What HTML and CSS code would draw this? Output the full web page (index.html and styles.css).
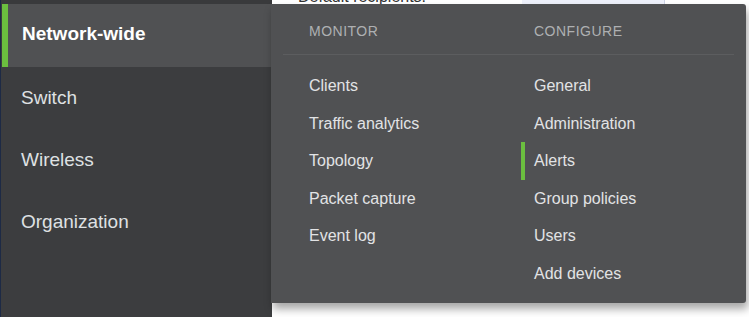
FILE: index.html
```html
<!DOCTYPE html>
<html>
<head>
  <title>Network-wide menu</title>
  <link rel="stylesheet" href="styles.css">
</head>
<body>
  <div class="layout">
    <nav class="sidebar">
      <div class="side-top"></div>
      <a class="side-item active">Network-wide</a>
      <a class="side-item">Switch</a>
      <a class="side-item">Wireless</a>
      <a class="side-item">Organization</a>
    </nav>

    <div class="page">
      <div class="page-head">
        <span class="recipients">Default recipients:</span>
        <div class="recipients-box"></div>
      </div>
    </div>
  </div>

  <div class="dropdown">
    <div class="dropdown-head">
      <div class="col-title">Monitor</div>
      <div class="col-title">Configure</div>
    </div>
    <div class="dropdown-body">
      <ul class="menu-col">
        <li>Clients</li>
        <li>Traffic analytics</li>
        <li>Topology</li>
        <li>Packet capture</li>
        <li>Event log</li>
      </ul>
      <ul class="menu-col">
        <li>General</li>
        <li>Administration</li>
        <li class="current">Alerts</li>
        <li>Group policies</li>
        <li>Users</li>
        <li>Add devices</li>
      </ul>
    </div>
  </div>
</body>
</html>
```

FILE: styles.css
```css
body {
  margin: 0;
  font-family: "Liberation Sans", Arial, sans-serif;
  background-color: white;
  overflow: hidden;
}
.layout {
  display: flex;
  height: 317px;
}
.sidebar {
  width: 271px;
  background-color: #3c3d3f;
  border-left: 1px solid #1d2a45;
  display: flex;
  flex-direction: column;
  flex-shrink: 0;
}
.side-top {
  height: 4px;
  background-color: #393a3c;
}
.side-item {
  display: block;
  height: 62px;
  line-height: 62px;
  padding-left: 20px;
  font-size: 19px;
  color: #dfe1e3;
}
.side-item.active {
  height: 63px;
  line-height: 60px;
  margin-left: 1px;
  margin-right: -4px;
  padding-left: 14px;
  border-left: 6px solid #6bbf3f;
  background-color: #505153;
  color: white;
  font-weight: bold;
}
.page {
  flex: 1;
  background-color: white;
}
.page-head {
  display: flex;
  height: 4px;
  overflow: hidden;
}
.recipients {
  margin-left: 26px;
  margin-top: -10px;
  font-size: 16px;
  line-height: 14px;
  color: #333;
}
.recipients-box {
  margin-left: 96px;
  width: 142px;
  background-color: #eef1fb;
  border-right: 1px solid #cdd3e6;
}
.dropdown {
  position: absolute;
  top: 4px;
  left: 271px;
  width: 475px;
  height: 299px;
  background-color: #505153;
  border-radius: 0 3px 3px 0;
  box-shadow: 2px 6px 8px rgba(0, 0, 0, 0.35);
  box-sizing: border-box;
  padding: 0 12px;
}
.dropdown-head {
  display: grid;
  grid-template-columns: 225px 1fr;
  height: 50px;
  padding-left: 26px;
  border-bottom: 1px solid #5c5d5f;
}
.col-title {
  padding-top: 19px;
  font-size: 14px;
  letter-spacing: 0.5px;
  text-transform: uppercase;
  color: #aeb0b2;
}
.dropdown-body {
  display: grid;
  grid-template-columns: 251px 1fr;
  padding-top: 12px;
}
.menu-col {
  list-style: none;
  margin: 0;
  padding: 0;
}
.menu-col:first-child {
  padding-left: 26px;
}
.menu-col li {
  height: 37.6px;
  line-height: 37.6px;
  font-size: 16px;
  color: #e2e3e5;
}
.menu-col li.current {
  margin-left: -13px;
  padding-left: 9px;
  border-left: 4px solid #6bbf3f;
}
```
